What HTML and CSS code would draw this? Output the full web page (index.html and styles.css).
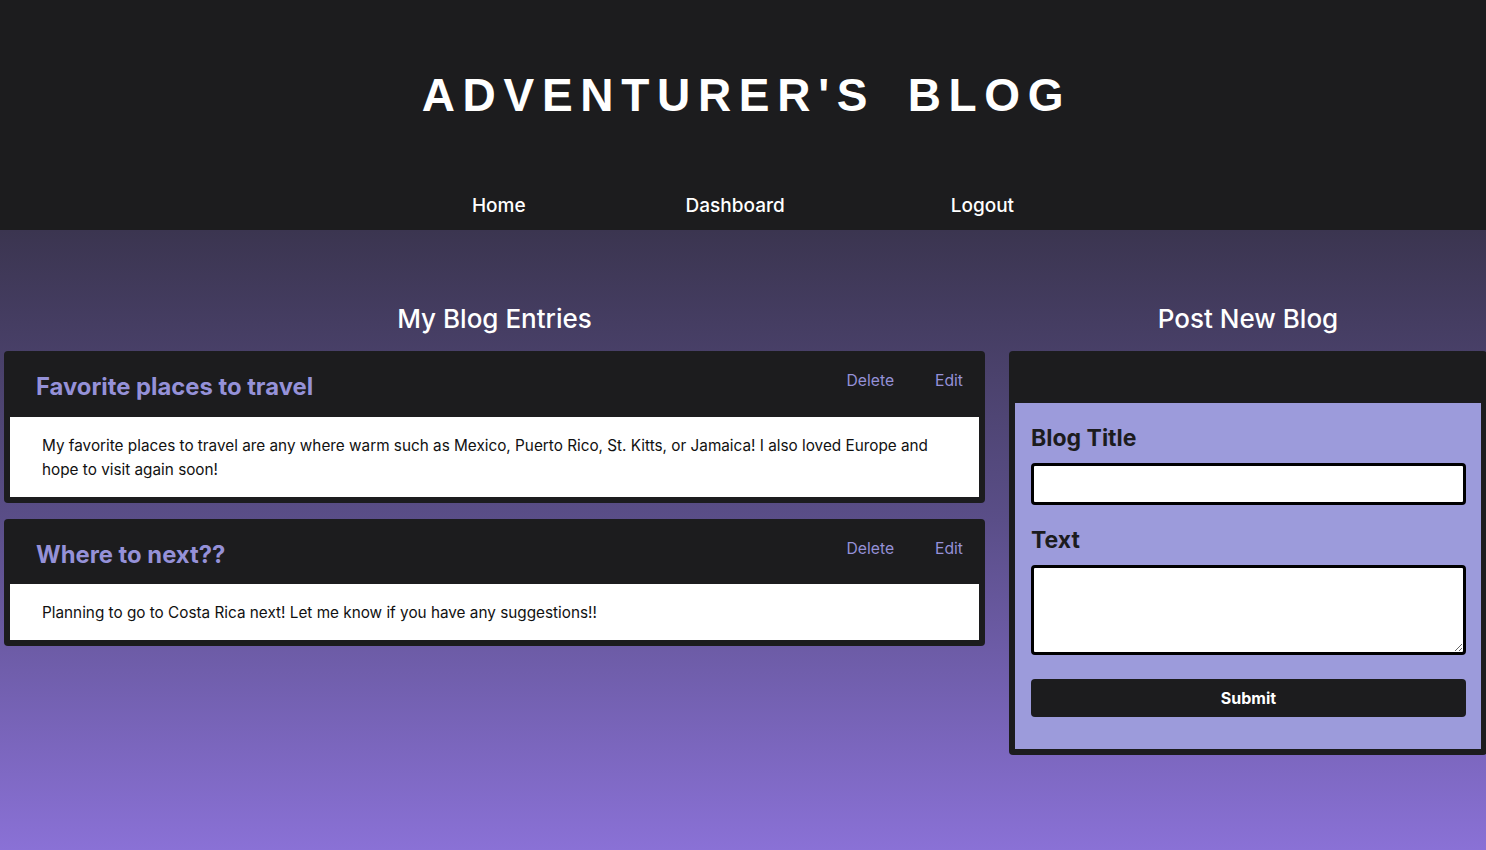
FILE: index.html
```html
<!DOCTYPE html>
<html lang="en">
<head>
<meta charset="utf-8">
<title>Adventurer's Blog</title>
<link rel="stylesheet" href="styles.css">
</head>
<body>
<header class="site-header">
  <h1 class="site-title">ADVENTURER'S BLOG</h1>
  <nav class="site-nav">
    <a href="#" class="nav-link">Home</a>
    <a href="#" class="nav-link">Dashboard</a>
    <a href="#" class="nav-link nav-link-last">Logout</a>
  </nav>
</header>
<main class="layout">
  <section class="column">
    <h2 class="column-heading">My Blog Entries</h2>
    <div class="entries">
      <article class="card">
        <div class="card-head">
          <h3 class="card-title">Favorite places to travel</h3>
          <div class="card-actions">
            <a href="#" class="action">Delete</a>
            <a href="#" class="action">Edit</a>
          </div>
        </div>
        <div class="card-body">My favorite places to travel are any where warm such as Mexico, Puerto Rico, St. Kitts, or Jamaica! I also loved Europe and hope to visit again soon!</div>
      </article>
      <article class="card">
        <div class="card-head card-head-short">
          <h3 class="card-title">Where to next??</h3>
          <div class="card-actions">
            <a href="#" class="action">Delete</a>
            <a href="#" class="action">Edit</a>
          </div>
        </div>
        <div class="card-body">Planning to go to Costa Rica next! Let me know if you have any suggestions!!</div>
      </article>
    </div>
  </section>
  <section class="column">
    <h2 class="column-heading">Post New Blog</h2>
    <div class="card form-card">
      <div class="form-head"></div>
      <form class="post-form">
        <label class="form-label" for="title">Blog Title</label>
        <input class="form-input" id="title" type="text">
        <label class="form-label form-label-gap" for="text">Text</label>
        <textarea class="form-textarea" id="text"></textarea>
        <button class="submit-btn" type="button">Submit</button>
      </form>
    </div>
  </section>
</main>
</body>
</html>
```
FILE: styles.css
```css
* { box-sizing: border-box; }
html, body { margin: 0; padding: 0; }
html { overflow-x: hidden; }
body {
  font-family: Inter, "Noto Sans", sans-serif;
  min-height: 100vh;
  background: linear-gradient(to bottom, #1c1c1e 0, #1c1c1e 230px, #3b3550 230px, #5a4e88 520px, #8a71d6 850px);
  color: #fff;
  overflow-x: hidden;
}
.site-header {
  background: #1c1c1e;
  height: 230px;
  padding-top: 60px;
  display: flex;
  flex-direction: column;
  align-items: center;
}
.site-title {
  margin: 0;
  font-family: "Liberation Sans", Arial, sans-serif;
  font-size: 46px;
  line-height: 70px;
  font-weight: 700;
  letter-spacing: 7.7px;
  word-spacing: 12px;
  padding-left: 7px;
  color: #fff;
}
.site-nav {
  margin-top: 61px;
  display: flex;
  gap: 160px;
}
.nav-link {
  color: #fff;
  text-decoration: none;
  font-size: 19px;
  font-weight: 500;
  line-height: 30px;
}
.nav-link-last { margin-left: 6px; }
.layout {
  display: grid;
  grid-template-columns: 981px 478px;
  column-gap: 24px;
  padding: 71px 0 0 4px;
  align-items: start;
}
.column-heading {
  margin: 0 0 14px;
  text-align: center;
  font-size: 26px;
  line-height: 36px;
  font-weight: 500;
  color: #fff;
}
.entries {
  display: flex;
  flex-direction: column;
  gap: 16px;
}
.card {
  background: #1c1c1e;
  border-radius: 4px;
  padding: 6px;
}
.card-head {
  height: 60px;
  display: flex;
  justify-content: space-between;
  align-items: flex-start;
  padding: 0 16px 0 26px;
}
.card-head-short { height: 59px; }
.card-title {
  margin: 0;
  align-self: center;
  font-size: 23.8px;
  line-height: 30px;
  font-weight: 700;
  color: #9591d8;
}
.card-actions {
  display: flex;
  gap: 41px;
  padding-top: 13px;
}
.action {
  color: #9591d8;
  text-decoration: none;
  font-size: 15.7px;
  line-height: 22px;
}
.card-body {
  background: #fff;
  color: #111;
  font-size: 15.3px;
  line-height: 24px;
  padding: 17px 32px 15px;
}
.form-head { height: 46px; }
.post-form {
  background: #9c9bdb;
  padding: 20px 15px 32px 16px;
  display: flex;
  flex-direction: column;
}
.form-label {
  font-size: 23px;
  line-height: 30px;
  font-weight: 700;
  color: #1c1c1e;
}
.form-label-gap { margin-top: 20px; }
.form-input,
.form-textarea {
  margin-top: 10px;
  background: #fff;
  border: 3px solid #000;
  border-radius: 4px;
  font-family: inherit;
  font-size: 16px;
}
.form-input { height: 42px; }
.form-textarea { height: 90px; resize: vertical; }
.submit-btn {
  margin-top: 24px;
  height: 38px;
  background: #1c1c1e;
  color: #fff;
  border: none;
  border-radius: 4px;
  font-family: inherit;
  font-size: 16px;
  font-weight: 700;
}
```
